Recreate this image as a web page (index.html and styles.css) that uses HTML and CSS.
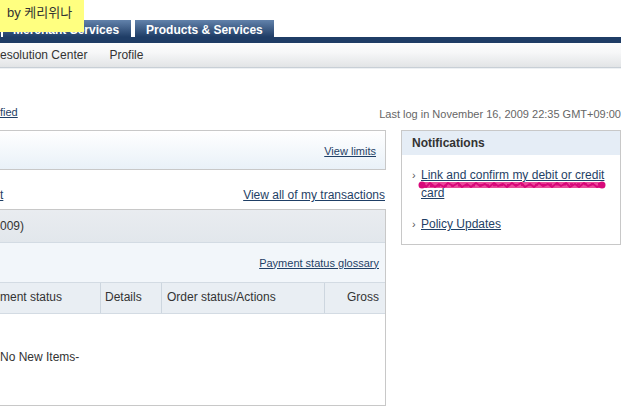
FILE: index.html
```html
<!DOCTYPE html>
<html lang="en-US">
    <head>
        <meta charset="utf-8">
        <title>My Account Overview</title>

        <link rel="stylesheet" href="styles.css">
    </head>
    <body>
        <!-- watermark label sits over the tabs -->
        <div class="tag">by 케리위나</div>

        <div class="tabs">
            <div class="tab sliver"></div>
            <div class="tab merchant">Merchant Services</div>
            <div class="tab">Products &amp; Services</div>
        </div>
        <div class="navbar"></div>
        <div class="subnav">
            <span>esolution Center</span>
            <span>Profile</span>
        </div>

        <div class="topline">
            <a href="#">fied</a>
            <span class="lastlog">Last log in November 16, 2009 22:35 GMT+09:00</span>
        </div>

        <div class="columns">
            <div class="main">
                <div class="limits"><a href="#">View limits</a></div>
                <div class="links">
                    <a href="#">t</a>
                    <a href="#">View all of my transactions</a>
                </div>
                <div class="activity">
                    <div class="act-head">009)</div>
                    <div class="act-tools"><a href="#">Payment status glossary</a></div>
                    <div class="act-cols">
                        <div class="col c-status">ment status</div>
                        <div class="col c-details">Details</div>
                        <div class="col c-order">Order status/Actions</div>
                        <div class="col c-gross">Gross</div>
                    </div>
                    <div class="act-empty">No New Items-</div>
                </div>
            </div>

            <div class="side">
                <div class="notes">
                    <h4>Notifications</h4>
                    <ul>
                        <li>
                            <span class="bullet">&#8250;</span>
                            <a href="#">Link and confirm my debit or credit card</a>
                            <!-- pink marker scribble over the first line -->
                            <svg class="scribble" width="190" height="12" viewBox="0 0 190 12">
                                <path d="M5 6 L185 6" stroke="#ea4a9a" stroke-width="6" stroke-linecap="round"/>
                                <path d="M4 5 L9 8 L13 4 L18 8 L22 5 L27 8 L31 4 L36 7 L41 4 L45 8 L50 5 L54 8 L59 4 L63 7 L68 5 L72 8 L77 4 L81 7 L86 5 L90 8 L95 4 L99 7 L104 4 L108 8 L113 5 L117 8 L122 4 L126 7 L131 5 L135 8 L140 4 L144 7 L149 4 L153 8 L158 5 L162 8 L167 4 L171 7 L176 5 L180 8 L185 6" fill="none" stroke="#d8087a" stroke-width="2" stroke-linejoin="round"/>
                                <path d="M6 7 L184 5" stroke="#d8087a" stroke-width="2" stroke-dasharray="3 4"/>
                                <circle cx="5" cy="6" r="3.5" fill="#d8087a"/>
                                <circle cx="185" cy="6" r="3.5" fill="#d8087a"/>
                            </svg>
                        </li>
                        <li>
                            <span class="bullet">&#8250;</span>
                            <a href="#">Policy Updates</a>
                        </li>
                    </ul>
                </div>
            </div>
        </div>
    </body>
</html>
```

FILE: styles.css
```css
body {
    margin: 0;
    width: 621px;
    height: 408px;
    overflow: hidden;
    background-color: #fff;
    font-family: "Liberation Sans", Arial, "Noto Sans CJK KR", sans-serif;
    font-size: 12px;
    color: #333;
    position: relative;
}

a {
    color: #1f3f66;
    text-decoration: underline;
}

.tag {
    position: absolute;
    left: 0;
    top: 0;
    width: 84px;
    height: 32px;
    box-sizing: border-box;
    padding: 5px 0 0 7px;
    line-height: 16px;
    font-size: 13px;
    background-color: #ffff80;
    color: #333;
}

.tabs {
    display: flex;
    margin-top: 20px;
    height: 17px;
}

.tab {
    height: 17px;
    overflow: hidden;
    padding: 0 11px;
    margin-right: 4px;
    line-height: 21px;
    font-weight: bold;
    color: #fff;
    background: linear-gradient(#6282ab, #1f3d66);
}

.tab.sliver {
    padding: 0;
    width: 1px;
    margin-right: 2px;
}

.tab.merchant {
    padding: 0 12px 0 10px;
}

.navbar {
    height: 6px;
    background-color: #1f3d66;
}

.subnav {
    display: flex;
    gap: 22px;
    height: 24px;
    line-height: 25px;
    border-bottom: 1px solid #c8cfd6;
    box-shadow: 0 1px 0 #eef1f4;
    background: linear-gradient(#fdfdfd, #f6f7f8 40%, #e2e4e6);
    color: #333;
}

.topline {
    display: flex;
    justify-content: space-between;
    margin-top: 36px;
    height: 16px;
    line-height: 16px;
    font-size: 11px;
}

.lastlog {
    padding-top: 2px;
    color: #666;
    white-space: nowrap;
}

.columns {
    display: flex;
    margin-top: 10px;
}

.main {
    width: 386px;
}

.limits {
    height: 40px;
    box-sizing: border-box;
    border: 1px solid #c8c8c8;
    border-left: none;
    background: linear-gradient(#fff, #e9f1f8);
    display: flex;
    justify-content: flex-end;
    padding: 13px 9px 0 0;
    line-height: 14px;
    font-size: 11px;
}

.links {
    display: flex;
    justify-content: space-between;
    margin: 17px 1px 6px 0;
    line-height: 16px;
}

.activity {
    border: 1px solid #c8c8c8;
    border-left: none;
}

.act-head {
    height: 32px;
    line-height: 32px;
    background: linear-gradient(#e9ecf0, #e2e7ec);
    border-bottom: 1px solid #d3dbe3;
}

.act-tools {
    height: 39px;
    display: flex;
    align-items: center;
    justify-content: flex-end;
    padding-right: 6px;
    background-color: #f2f6fa;
    border-bottom: 1px solid #d3dbe3;
    font-size: 11px;
}

.act-cols {
    display: flex;
    height: 30px;
    line-height: 28px;
    background-color: #e9eef3;
    border-bottom: 1px solid #d3dbe3;
}

.col {
    border-right: 1px solid #cdd6df;
    box-sizing: border-box;
}

.c-status {
    width: 101px;
}

.c-details {
    width: 61px;
    padding-left: 4px;
}

.c-order {
    width: 163px;
    padding-left: 5px;
}

.c-gross {
    flex: 1;
    border-right: none;
    text-align: right;
    padding-right: 6px;
}

.act-empty {
    height: 91px;
    box-sizing: border-box;
    padding-top: 35px;
    line-height: 16px;
}

.side {
    margin-left: 15px;
    width: 220px;
}

.notes {
    height: 115px;
    box-sizing: border-box;
    border: 1px solid #c8c8c8;
}

.notes h4 {
    margin: 0;
    height: 24px;
    line-height: 24px;
    padding-left: 10px;
    font-size: 12px;
    color: #333;
    background-color: #e5edf6;
}

.notes ul {
    list-style: none;
    margin: 0;
    padding: 11px 6px 0 10px;
}

.notes li {
    display: flex;
    position: relative;
    line-height: 18px;
    margin-bottom: 13px;
}

.bullet {
    width: 9px;
    flex: none;
    font-size: 11px;
    color: #555;
}

.scribble {
    position: absolute;
    left: 5px;
    top: 13px;
}
```
